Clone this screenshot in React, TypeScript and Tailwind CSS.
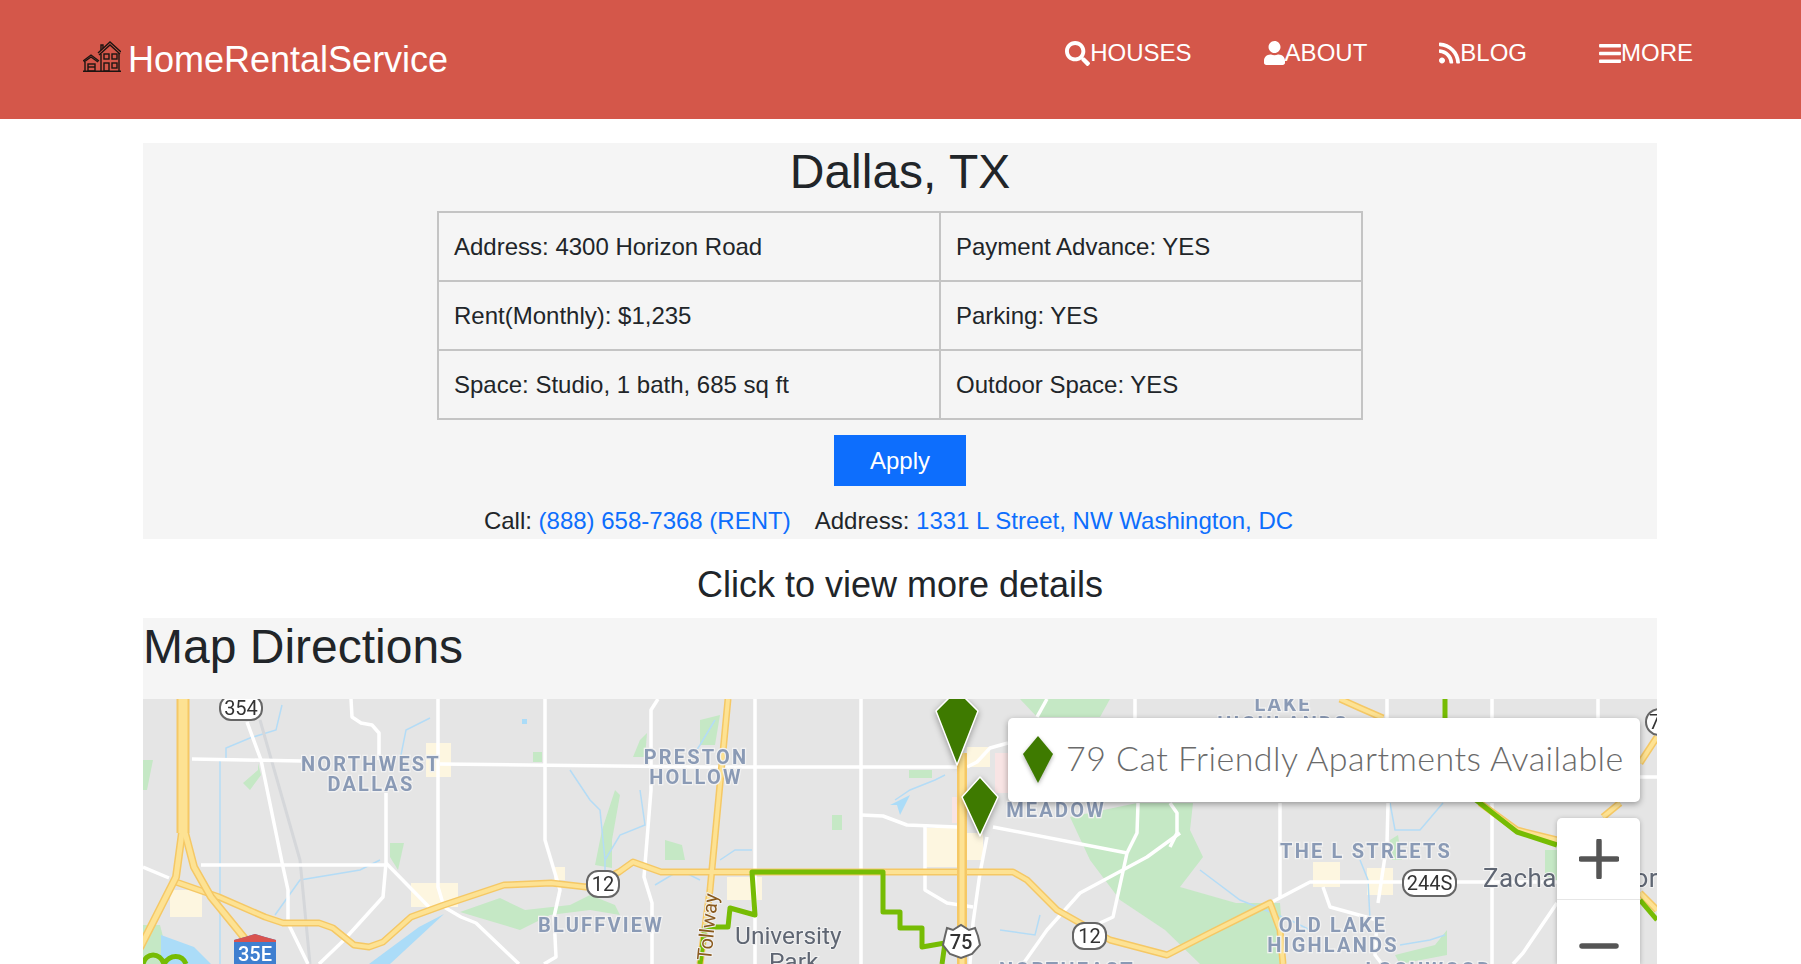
import { FaBars, FaRss, FaSearch, FaUser } from "react-icons/fa";

const navItems = [
  { label: "HOUSES", icon: <FaSearch className="h-[25px] w-[25px]" /> },
  { label: "ABOUT", icon: <FaUser className="h-6 w-[21px]" /> },
  { label: "BLOG", icon: <FaRss className="h-6 w-[21px]" /> },
  { label: "MORE", icon: <FaBars className="h-[25px] w-[22px]" /> },
];

const details = [
  ["Address: 4300 Horizon Road", "Payment Advance: YES"],
  ["Rent(Monthly): $1,235", "Parking: YES"],
  ["Space: Studio, 1 bath, 685 sq ft", "Outdoor Space: YES"],
];

const whiteRoads = [
  "351,699 352,717 361,723 372,725 379,733 379,760",
  "386,793 386,863 383,897 344,940 319,964",
  "192,759 301,761",
  "440,764 700,767 957,767",
  "247,722 261,760 283,867 288,890 288,923 308,964",
  "201,865 386,865",
  "386,863 429,907",
  "438,699 438,887 444,907 461,917 476,923 519,964",
  "545,699 545,840 560,890 554,917 556,957 544,964",
  "658,699 651,710 651,790 644,877 652,903 652,964",
  "143,867 169,878",
  "755,699 755,964",
  "861,699 861,964",
  "967,767 977,762 990,748 1008,743",
  "861,815 883,816 907,825 957,827",
  "993,827 1127,853",
  "925,827 925,890 947,903 973,907",
  "987,837 980,873 973,923 970,964",
  "1127,853 1113,917 1100,923",
  "1180,833 1147,857 1080,893 1047,930 1023,964",
  "1138,803 1137,833 1127,853",
  "1135,699 1135,720",
  "1037,717 1047,699",
  "1387,699 1387,718",
  "1492,699 1492,718",
  "1598,699 1598,718",
  "1280,803 1280,897",
  "1388,803 1387,843 1378,903",
  "1492,803 1492,964",
  "1640,777 1657,777",
  "1270,903 1310,882 1503,882 1557,882",
  "1557,903 1523,953 1513,964",
  "1323,887 1330,907 1377,920 1375,955 1382,964",
  "1170,803 1177,813 1177,833 1170,847",
];

const highways = [
  "176,882 219,897 265,917 283,923 319,923 333,928 354,945 369,947 383,942 411,917 444,905 504,885 551,883 586,887 619,872 633,862 647,867 661,872 1013,872 1027,880 1057,910 1110,940 1167,955 1210,933 1270,903 1280,930 1283,964",
  "728,699 710,890 700,964",
  "1340,699 1360,708 1383,718",
  "1480,803 1517,830 1557,840",
  "1640,893 1657,910",
  "1657,737 1640,763",
  "1620,803 1603,817",
];

const branches = ["183,825 176,877 140,948", "183,825 194,867 211,897 246,940"];

const parks = [
  "1020,699 1110,699 1100,717 1037,717",
  "1070,817 1137,803 1193,803 1190,830 1203,857 1180,887 1236,903 1280,903 1285,964 1200,964 1165,930 1120,900 1090,860",
  "1390,840 1398,835 1402,860 1392,860",
  "1545,850 1557,850 1557,882 1545,875",
  "1435,945 1447,930 1447,955 1400,964 1395,955",
  "143,760 153,760 147,790 143,790",
  "243,783 258,770 258,763 261,775 250,790",
  "390,843 404,843 398,870 390,857",
  "533,752 542,752 542,762 533,762",
  "633,757 640,740 647,733 645,757",
  "595,865 602,830 615,790 620,795 612,840 612,868",
  "665,840 682,845 685,860 665,860",
  "832,815 842,815 842,830 832,830",
  "460,912 500,898 525,910 570,905 590,895 615,905 620,915 590,910 550,915 520,930 480,918",
  "143,925 160,925 170,964 143,964",
  "909,770 932,770 932,778 909,778",
  "700,720 720,715 715,745 700,745",
];

const blocks = [
  [995, 753, 13, 40, "#f8e4e4"],
  [952, 797, 5, 26, "#f8e4e4"],
  [925, 828, 32, 39, "#fdf6e0"],
  [967, 747, 23, 20, "#fdf6e0"],
  [967, 833, 16, 27, "#fdf6e0"],
  [426, 743, 25, 34, "#fdf6e0"],
  [411, 883, 47, 24, "#fdf6e0"],
  [170, 890, 32, 27, "#fdf6e0"],
  [554, 867, 11, 13, "#fdf6e0"],
  [727, 877, 35, 23, "#fdf6e0"],
  [1313, 862, 27, 25, "#fdf6e0"],
  [1367, 868, 26, 27, "#fdf6e0"],
] as const;

const streams = [
  "226,760 226,748 250,738 276,730 282,705",
  "220,760 220,964",
  "400,760 406,730 430,718",
  "380,860 360,870 300,880 275,915",
  "570,770 590,800 600,810 605,860 605,880",
  "640,790 645,825 620,835 605,860",
  "655,885 680,870 700,880",
  "690,760 700,745 715,720",
  "720,860 735,850 752,850",
  "895,800 910,790 935,780 945,775",
  "1000,930 1035,935 1040,915",
  "1390,803 1395,830 1420,830 1443,803",
  "1370,920 1368,880 1360,860",
  "1200,870 1240,900 1290,920 1310,930",
  "1400,945 1430,940 1445,935",
];

const labels = [
  ["NORTHWEST", 371, 771],
  ["DALLAS", 371, 791],
  ["PRESTON", 696, 764],
  ["HOLLOW", 696, 784],
  ["BLUFFVIEW", 601, 932],
  ["MEADOW", 1056, 817],
  ["THE L STREETS", 1366, 858],
  ["OLD LAKE", 1333, 932],
  ["HIGHLANDS", 1333, 952],
  ["LAKE", 1283, 711],
  ["HIGHLANDS", 1283, 731],
  ["NORTHEAST", 1067, 977],
  ["LOCHWOOD", 1429, 977],
] as const;

const shields = [
  ["354", 219, 695, 44, 26],
  ["12", 586, 870, 34, 28],
  ["12", 1072, 922, 35, 28],
  ["244S", 1402, 869, 55, 28],
] as const;

const MapBase = () => (
  <svg viewBox="143 699 1514 265" className="block h-[265px] w-[1514px] blur-[0.6px]">
    <rect x="143" y="699" width="1514" height="265" fill="#e5e5e5" />
    {parks.map((p) => (
      <polygon key={p} points={p} fill="#c5e8c5" />
    ))}
    {blocks.map(([x, y, w, h, c]) => (
      <rect key={`${x}-${y}`} x={x} y={y} width={w} height={h} fill={c} />
    ))}
    <polygon points="161,935 194,947 211,964 161,964" fill="#abdcf8" />
    <polygon points="444,914 419,927 369,964 390,964" fill="#abdcf8" />
    <polygon points="890,805 910,795 900,815 897,805" fill="#abdcf8" />
    <rect x="522" y="719" width="5" height="5" fill="#abdcf8" />
    {streams.map((s) => (
      <polyline key={s} points={s} fill="none" stroke="#b4dcf6" strokeWidth="1.5" />
    ))}
    <polyline points="260,720 300,860 310,964" fill="none" stroke="#d5d7da" strokeWidth="3" />
    {whiteRoads.map((r) => (
      <polyline key={r} points={r} fill="none" stroke="#fff" strokeWidth="3.5" strokeLinejoin="round" />
    ))}
    {highways.map((r) => (
      <polyline key={r} points={r} fill="none" stroke="#f5c865" strokeWidth="7" strokeLinejoin="round" />
    ))}
    {highways.map((r) => (
      <polyline key={`${r}-in`} points={r} fill="none" stroke="#fde293" strokeWidth="4" strokeLinejoin="round" />
    ))}
    {branches.map((r) => (
      <polyline key={r} points={r} fill="none" stroke="#f5c865" strokeWidth="8" strokeLinejoin="round" />
    ))}
    {branches.map((r) => (
      <polyline key={`${r}-in`} points={r} fill="none" stroke="#fde293" strokeWidth="5" strokeLinejoin="round" />
    ))}
    <line x1="183" y1="699" x2="183" y2="833" stroke="#f5c865" strokeWidth="13" />
    <line x1="183" y1="699" x2="183" y2="833" stroke="#fde293" strokeWidth="9" />
    <line x1="962" y1="753" x2="962" y2="964" stroke="#f5c865" strokeWidth="10" />
    <line x1="962" y1="753" x2="962" y2="964" stroke="#fde293" strokeWidth="5" />
    {/* route line */}
    <g fill="none" stroke="#76bc04" strokeWidth="5" strokeLinejoin="round">
      <polyline points="942,964 945,943 922,947 922,928 900,928 900,912 883,912 883,872 752,872 755,915 730,908 728,927 705,927 700,964" />
      <polyline points="1445,699 1445,718" />
      <polyline points="1476,800 1517,832 1557,845" />
      <polyline points="1640,900 1657,920" />
      <path d="M143 964 C146 952 160 952 164 964 M164 964 C170 954 182 954 186 964" />
    </g>
    <g fontFamily="Roboto, sans-serif" fontWeight="700" fontSize="20" letterSpacing="2.2" fill="#8a9ab5" stroke="#f2f2f2" strokeWidth="2.5" paintOrder="stroke" textAnchor="middle">
      {labels.map(([t, x, y]) => (
        <text key={`${t}-${y}`} x={x} y={y}>
          {t}
        </text>
      ))}
    </g>
    <g fontFamily="Roboto, sans-serif" fill="#5f6673" stroke="#f2f2f2" strokeWidth="2" paintOrder="stroke">
      <text x="735" y="944" fontSize="24.5">University</text>
      <text x="769" y="970" fontSize="24.5">Park</text>
      <text x="1483" y="887" fontSize="26" letterSpacing="0.4">Zachary Taylor</text>
      <text transform="translate(711 961) rotate(-84)" fontSize="20" fill="#8a5a1e">Tollway</text>
    </g>
    {shields.map(([t, x, y, w, h]) => (
      <g key={`${t}-${x}`}>
        <rect x={x + 1} y={y + 1} width={w - 2} height={h - 2} rx="11" fill="#fff" stroke="#666" strokeWidth="2" />
        <text x={x + w / 2} y={y + h / 2 + 7} fontFamily="Roboto, sans-serif" fontSize="20" fill="#333" textAnchor="middle">
          {t}
        </text>
      </g>
    ))}
    <circle cx="1659" cy="722" r="13" fill="#fff" stroke="#666" strokeWidth="2" />
    <text x="1649" y="729" fontFamily="Roboto, sans-serif" fontSize="20" fill="#333">7</text>
    <path d="M947 928 L953 930 L961 925 L969 930 L975 928 L978 936 L980 945 L972 954 L961 958 L950 954 L943 945 L945 936 Z" fill="#fff" stroke="#666" strokeWidth="2" />
    <text x="961" y="949" fontFamily="Roboto, sans-serif" fontWeight="500" fontSize="20" fill="#333" textAnchor="middle">75</text>
    <path d="M234 940 L245 937 L255 934 L265 937 L276 940 L276 964 L234 964 Z" fill="#3f7fd0" />
    <path d="M234 940 L245 937 L255 934 L265 937 L276 940 L276 942 L234 942 Z" fill="#d9534f" />
    <text x="255" y="961" fontFamily="Roboto, sans-serif" fontSize="20" fontWeight="500" fill="#fff" textAnchor="middle">35E</text>
  </svg>
);

const Pin = ({ points, box, className }: { points: string; box: string; className: string }) => (
  <svg viewBox={box} className={className}>
    <polygon points={points} fill="#3e7a00" stroke="#fff" strokeWidth="1.5" strokeLinejoin="round" />
  </svg>
);

const HouseLogo = () => (
  <svg viewBox="0 0 38 31" className="mt-[3px] h-[31px] w-[38px]" fill="none" stroke="#1c1512" strokeWidth="1.4">
    <path d="M15 12 L27 1 L38 11" />
    <path d="M16 14 L27 4 L37 13" />
    <path d="M18 9 V4 H20 V7" />
    <path d="M18 13 V30 M36 12 V30" />
    <path d="M0 20 L8 14 L16 20 M1 21 L8 16 L15 21" />
    <path d="M2 21 V30 M0 30.3 H38" />
    <rect x="5" y="23" width="7" height="7" />
    <path d="M5 26 H12" />
    <rect x="21" y="13" width="5" height="5" />
    <rect x="29" y="13" width="5" height="5" />
    <rect x="29" y="22" width="5" height="5" />
    <rect x="21" y="22" width="5" height="8" />
  </svg>
);

export default function App() {
  return (
    <div className="h-[964px] overflow-hidden bg-white font-['Liberation_Sans',Arial,sans-serif] text-2xl text-[#212529]">
      <header className="flex h-[119px] bg-[#d4574a] text-white">
        <div className="ml-[83px] flex h-fit items-start gap-[7px] pt-[38px]">
          <HouseLogo />
          <span className="text-4xl leading-[43px]">HomeRentalService</span>
        </div>
        <nav className="ml-auto mr-[108px] flex gap-[72px] pt-[35px]">
          {navItems.map((item) => (
            <a key={item.label} className="flex h-fit items-center leading-9">
              {item.icon}
              {item.label}
            </a>
          ))}
        </nav>
      </header>

      <main className="ml-[143px] w-[1514px]">
        <section className="mt-6 flex flex-col items-center bg-[#f5f5f5]">
          <h1 className="mb-[11px] text-5xl leading-[57px]">Dallas, TX</h1>
          <table className="w-[926px] border-collapse">
            <tbody>
              {details.map((row) => (
                <tr key={row[0]}>
                  <td className="h-[69px] w-[502px] border-2 border-[#c4c4c4] px-[15px] py-0 leading-9">{row[0]}</td>
                  <td className="h-[69px] border-2 border-[#c4c4c4] px-[15px] py-0 leading-9">{row[1]}</td>
                </tr>
              ))}
            </tbody>
          </table>
          <button className="mt-[15px] h-[51px] bg-[#0d6efd] px-9 text-white">Apply</button>
          <p className="mr-[23px] mt-4 leading-[37px]">
            Call: <a className="text-[#0d6efd]">(888) 658-7368 (RENT)</a>
            <span className="ml-6">Address: </span>
            <a className="text-[#0d6efd]">1331 L Street, NW Washington, DC</a>
          </p>
        </section>

        <p className="mt-6 text-center text-4xl leading-[43px]">Click to view more details</p>

        <section className="mt-3 bg-[#f5f5f5]">
          <h2 className="h-[81px] text-5xl leading-[57px]">Map Directions</h2>
          <div className="relative h-[265px] overflow-hidden">
            <MapBase />
            <Pin
              box="0 0 46 70"
              points="23,-9 44,12 23,66 2,12"
              className="absolute left-[791px] top-0 h-[70px] w-[46px] drop-shadow-[0_2px_3px_rgba(0,0,0,0.35)]"
            />
            <Pin
              box="0 0 40 64"
              points="20,2 38,22 20,61 2,22"
              className="absolute left-[817px] top-[76px] h-[64px] w-[40px] drop-shadow-[0_2px_3px_rgba(0,0,0,0.35)]"
            />
            <div className="absolute left-[865px] top-[19px] flex h-[84px] w-[632px] items-center rounded-[5px] bg-white pl-[14px] shadow-[0_2px_6px_rgba(0,0,0,0.35)]">
              <svg viewBox="0 0 32 50" className="h-[50px] w-[32px] drop-shadow-[0_2px_2px_rgba(0,0,0,0.3)]">
                <polygon points="16,1 31,19 16,48 1,19" fill="#3e7a00" />
              </svg>
              <span className="mb-1 ml-3 whitespace-nowrap font-['Lato',sans-serif] text-[34px] font-light leading-none tracking-[0.45px] text-[#6a6a6a]">
                79 Cat Friendly Apartments Available
              </span>
            </div>
            <div className="absolute left-[1414px] top-[119px] w-[83px] rounded-t-[5px] bg-white shadow-[0_1px_5px_rgba(0,0,0,0.25)]">
              <button className="flex h-[82px] w-full items-center justify-center border-b border-[#e6e6e6]">
                <svg viewBox="0 0 40 40" className="h-10 w-10" stroke="#555" strokeWidth="5.5" strokeLinecap="round">
                  <path d="M20 2 V38 M2 20 H38" />
                </svg>
              </button>
              <button className="flex h-16 w-full items-start justify-center pt-[43px]">
                <svg viewBox="0 0 40 6" className="h-[6px] w-10" stroke="#555" strokeWidth="5.5" strokeLinecap="round">
                  <path d="M3 3 H37" />
                </svg>
              </button>
            </div>
          </div>
        </section>
      </main>
    </div>
  );
}
